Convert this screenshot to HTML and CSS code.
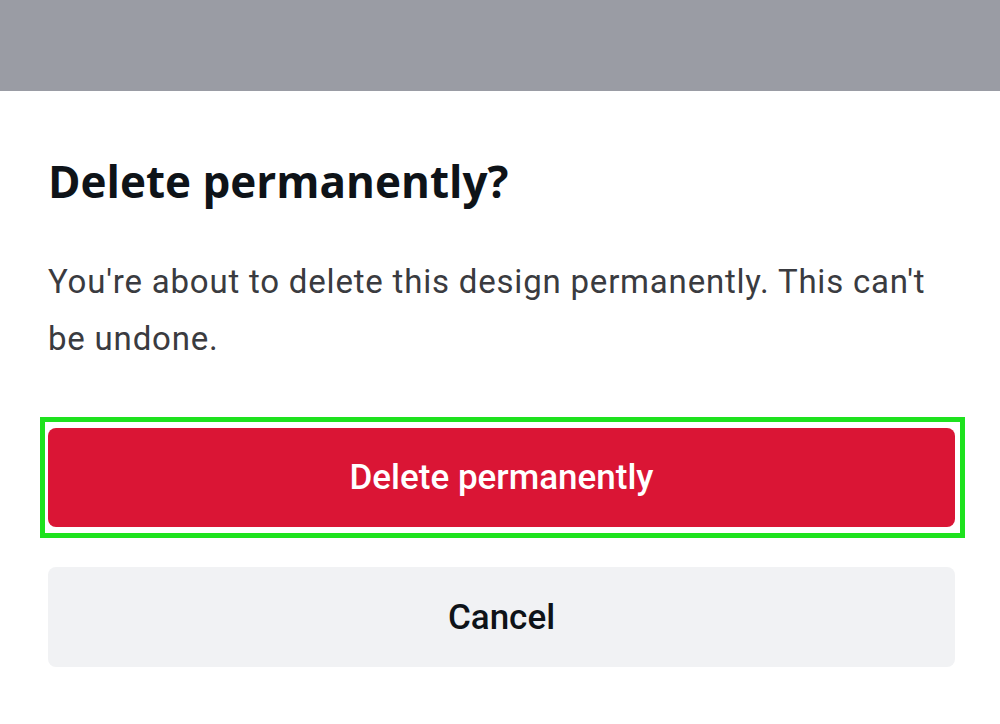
FILE: index.html
```html
<!DOCTYPE html>
<html lang="en">
<head>
    <meta charset="UTF-8">
    <title>Delete permanently?</title>
    <link rel="stylesheet" href="styles.css">
</head>
<body>
<div class="backdrop"></div>
<div class="sheet">
    <h1 class="sheet-title">Delete permanently?</h1>
    <p class="sheet-text">You're about to delete this design permanently. This can't be undone.</p>
    <div class="actions">
        <div class="action-wrap">
            <button class="btn btn-danger" type="button">Delete permanently</button>
            <div class="highlight"></div>
        </div>
        <button class="btn btn-secondary" type="button">Cancel</button>
    </div>
</div>
</body>
</html>
```

FILE: styles.css
```css
body {
    margin: 0;
    font-family: Roboto, "Liberation Sans", sans-serif;
    background-color: #fff;
}
.backdrop {
    height: 91px;
    background-color: #9a9ca4;
}
.sheet {
    padding: 0 45px 0 48px;
}
.sheet-title {
    margin: 65px 0 0;
    font-family: "Open Sans", Roboto, sans-serif;
    font-size: 44px;
    line-height: 50px;
    font-weight: 700;
    color: #0e1318;
}
.sheet-text {
    margin: 47px 0 0;
    font-size: 33px;
    line-height: 57px;
    letter-spacing: 0.8px;
    color: #3a3b40;
}
.actions {
    display: flex;
    flex-direction: column;
    gap: 40px;
    margin-top: 61px;
}
.action-wrap {
    position: relative;
}
.btn {
    display: block;
    width: 100%;
    height: 99px;
    border: none;
    border-radius: 8px;
    font-family: Roboto, "Liberation Sans", sans-serif;
    font-size: 35px;
    font-weight: 500;
    cursor: pointer;
}
.btn-danger {
    background-color: #da1535;
    color: #fff;
}
.btn-secondary {
    height: 100px;
    background-color: #f1f2f4;
    color: #0e1318;
}
.highlight {
    position: absolute;
    top: -11px;
    left: -8px;
    right: -10px;
    bottom: -11px;
    border: 5px solid #1ee21e;
    pointer-events: none;
}
```
